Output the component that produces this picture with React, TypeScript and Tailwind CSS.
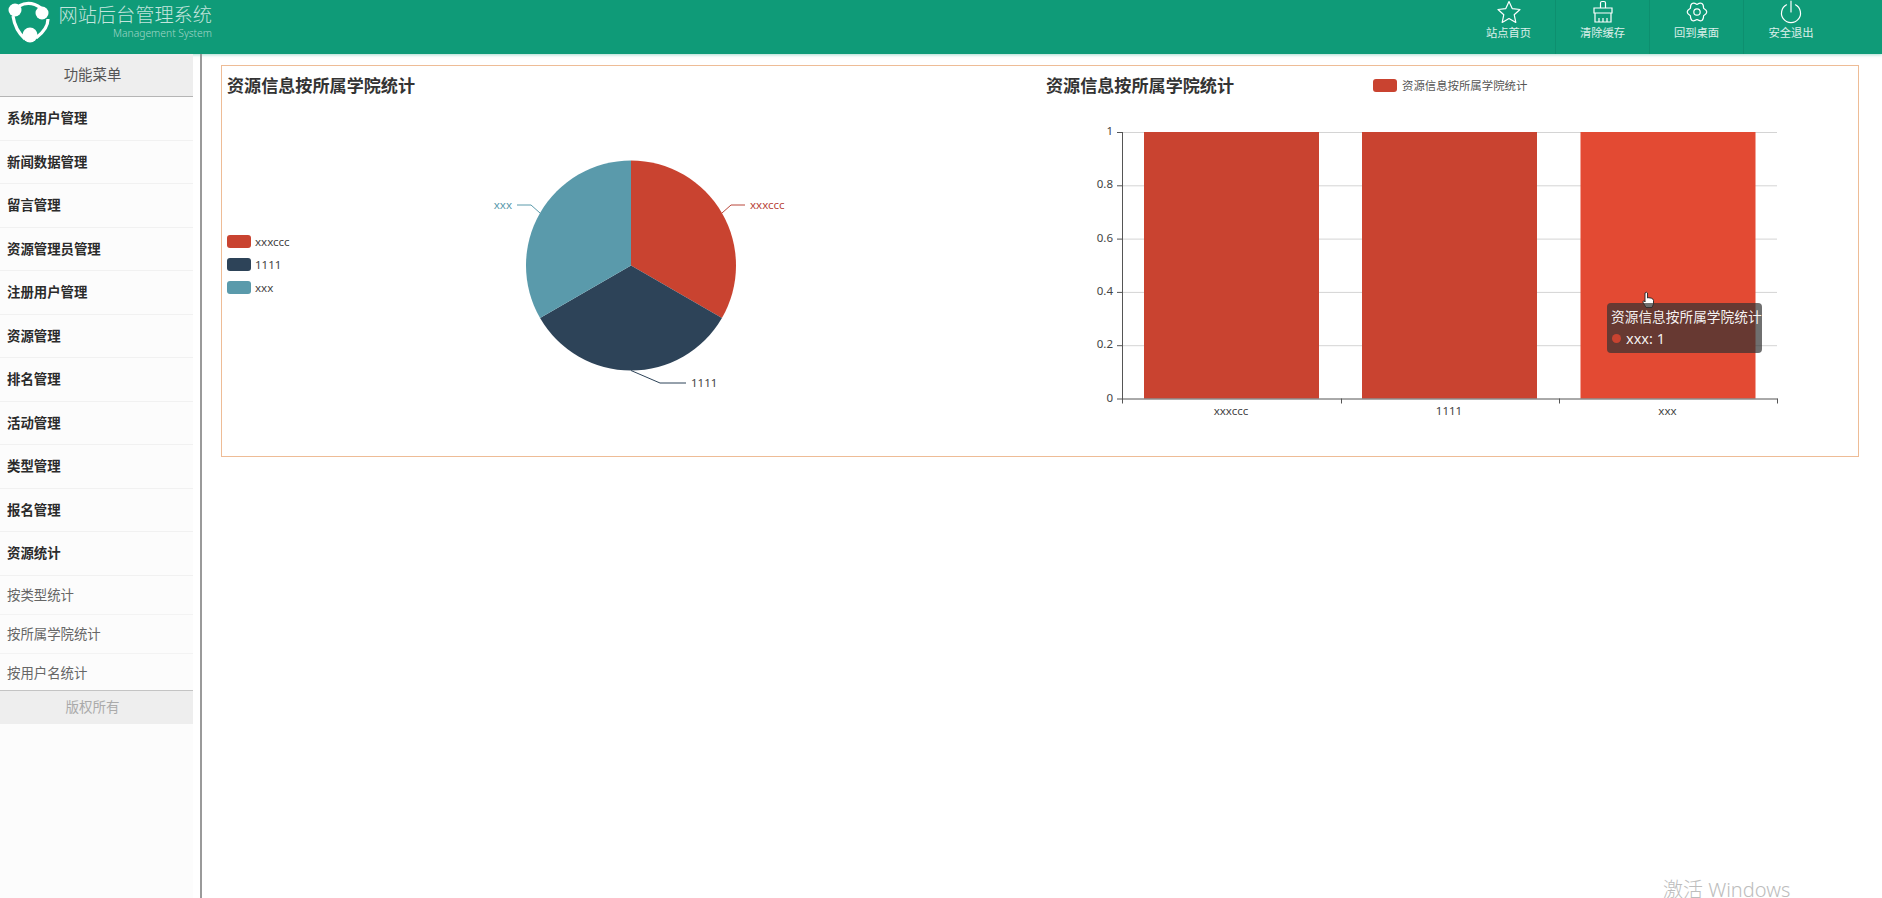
import React from "react";

const menu = ["系统用户管理","新闻数据管理","留言管理","资源管理员管理","注册用户管理","资源管理","排名管理","活动管理","类型管理","报名管理","资源统计"];
const sub = ["按类型统计","按所属学院统计","按用户名统计"];
const F = '"Noto Sans","Noto Sans CJK SC",sans-serif';

function Logo() {
  return (
    <svg width="58" height="50" viewBox="0 0 58 50" className="shrink-0">
      <path d="M13 16 Q15 30 25 39" fill="none" stroke="#fff" strokeWidth="3.2" />
      <path d="M48 19 Q48 29 36 38" fill="none" stroke="#fff" strokeWidth="3.2" />
      <path d="M19 6 Q30 0 41 8" fill="none" stroke="#fff" strokeWidth="3.2" />
      <circle cx="15" cy="10" r="6.5" fill="#fff" />
      <circle cx="42" cy="13" r="6.5" fill="#fff" />
      <circle cx="30" cy="35" r="7.5" fill="#fff" />
    </svg>
  );
}

const Star = () => (
  <svg width="26" height="24" viewBox="0 0 26 24" fill="none" stroke="#fff" strokeWidth="1.2" strokeLinejoin="round">
    <path d="M13 1.5 L16.2 8.6 L24 9.5 L18.2 14.7 L19.8 22.4 L13 18.5 L6.2 22.4 L7.8 14.7 L2 9.5 L9.8 8.6 Z" />
  </svg>
);
const Broom = () => (
  <svg width="24" height="24" viewBox="0 0 24 24" fill="none" stroke="#fff" strokeWidth="1.2">
    <path d="M9.5 8 V3 Q9.5 1.5 11 1.5 H13 Q14.5 1.5 14.5 3 V8" />
    <path d="M3 8 H21 V13 H3 Z" />
    <path d="M4 13 V22 H20 V13" />
    <path d="M8 18 V22 M12 18 V22 M16 18 V22" />
  </svg>
);
const Cog = () => (
  <svg width="24" height="24" viewBox="0 0 24 24" fill="none" stroke="#fff" strokeWidth="1.2" strokeLinejoin="round">
    <path d="M18.6 8.2 Q25 12 18.6 15.8 Q18.5 23.26 12 19.6 Q5.5 23.26 5.4 15.8 Q-1 12 5.4 8.2 Q5.5 0.74 12 4.4 Q18.5 0.74 18.6 8.2 Z" />
    <circle cx="12" cy="12" r="3.2" />
  </svg>
);
const Power = () => (
  <svg width="24" height="24" viewBox="0 0 24 24" fill="none" stroke="#fff" strokeWidth="1.2" strokeLinecap="round">
    <path d="M12 1 V12" />
    <path d="M7.5 4.8 A9.5 9.5 0 1 0 16.5 4.8" />
  </svg>
);

const nav: [React.ReactNode, string][] = [
  [<Star />, "站点首页"],
  [<Broom />, "清除缓存"],
  [<Cog />, "回到桌面"],
  [<Power />, "安全退出"],
];

function Header() {
  return (
    <header className="h-[54px] shrink-0 flex items-start justify-between bg-[#0f9b78] shadow-[0_1px_3px_rgba(15,155,120,0.35)] overflow-hidden">
      <div className="flex items-start h-full">
        <Logo />
        <div className="pt-[2px] w-[154px] text-right">
          <div className="text-[19.2px] leading-[26px] whitespace-nowrap text-white/75 font-light">网站后台管理系统</div>
          <div className="text-[10.3px] leading-[12px] -mt-[1px] text-white/60 font-light">Management System</div>
        </div>
      </div>
      <nav className="flex mr-[44px] h-full">
        {nav.map(([icon, label], i) => (
          <div key={label} className={`w-[94px] flex flex-col items-center ${i < 3 ? "border-r border-[#0d8f6f]" : ""}`}>
            <div className="h-[24px] flex items-center">{icon}</div>
            <div className="text-[11.3px] leading-[16px] mt-[1px] text-white/85">{label}</div>
          </div>
        ))}
      </nav>
    </header>
  );
}

function Sidebar() {
  return (
    <aside className="w-[193px] shrink-0 bg-[#fcfcfc]">
      <div className="h-[43px] flex items-center justify-center pr-[8px] bg-[#eeeeee] border-b border-[#b5b5b5] text-[14.4px] text-[#555]">功能菜单</div>
      <div className="h-[593px] overflow-hidden">
        {menu.map((m) => (
          <div key={m} className="h-[43.5px] flex items-center pl-[7px] border-b border-[#f1f1f1] text-[13.4px] font-bold text-[#2b2b2b]">{m}</div>
        ))}
        {sub.map((m) => (
          <div key={m} className="h-[39px] flex items-center pl-[7px] pt-[1px] border-b border-[#f3f3f3] text-[13.4px] text-[#666]">{m}</div>
        ))}
      </div>
      <div className="h-[34px] flex items-center justify-center pr-[8px] bg-[#eeeeee] border-t border-[#c4c4c4] text-[13.5px] text-[#aaa]">版权所有</div>
    </aside>
  );
}

function PieChart() {
  const cx = 410, cy = 199.5, r = 105;
  const px = (r * Math.sqrt(3)) / 2, py = r / 2;
  const right = `${cx + px} ${cy + py}`, left = `${cx - px} ${cy + py}`;
  return (
    <svg width="819" height="389" viewBox="0 0 819 389" className="shrink-0 -ml-px" style={{ fontFamily: F }}>
      <text x="6" y="26" fontSize="17.1" fontWeight="700" fill="#333">资源信息按所属学院统计</text>
      <rect x="6" y="169" width="24" height="13" rx="3" fill="#c94330" />
      <text x="34" y="180" fontSize="11.5" fill="#444">xxxccc</text>
      <rect x="6" y="192" width="24" height="13" rx="3" fill="#2d4358" />
      <text x="34" y="203" fontSize="11.5" fill="#444">1111</text>
      <rect x="6" y="215" width="24" height="13" rx="3" fill="#5a9aab" />
      <text x="34" y="226" fontSize="11.5" fill="#444">xxx</text>
      <path d={`M${cx} ${cy} L${cx} ${cy - r} A${r} ${r} 0 0 1 ${right} Z`} fill="#c94330" />
      <path d={`M${cx} ${cy} L${right} A${r} ${r} 0 0 1 ${left} Z`} fill="#2d4358" />
      <path d={`M${cx} ${cy} L${left} A${r} ${r} 0 0 1 ${cx} ${cy - r} Z`} fill="#5a9aab" />
      <path d="M501 147 L510 139 L524 139" fill="none" stroke="#b9463a" strokeWidth="1" />
      <text x="529" y="143" fontSize="11.5" fill="#b9463a">xxxccc</text>
      <path d="M319 147 L310 139 L296 139" fill="none" stroke="#5a9aab" strokeWidth="1" />
      <text x="291" y="143" fontSize="11.5" fill="#5a9aab" textAnchor="end">xxx</text>
      <path d="M410 304.5 L439 317 L465 317" fill="none" stroke="#2d4358" strokeWidth="1" />
      <text x="470" y="321" fontSize="11.5" fill="#444">1111</text>
    </svg>
  );
}

function BarChart() {
  const ox = 81, x1 = 736, top = 66, bot = 332.5;
  const ys = [0, 1, 2, 3, 4, 5].map((i) => top + (i * (bot - top)) / 5);
  const labels = ["1", "0.8", "0.6", "0.4", "0.2", "0"];
  const bars: [number, string, string][] = [
    [103, "#c94330", "xxxccc"],
    [321, "#c94330", "1111"],
    [539.5, "#e34a33", "xxx"],
  ];
  return (
    <svg width="816" height="389" viewBox="0 0 816 389" className="shrink-0" style={{ fontFamily: F }}>
      <text x="5" y="26" fontSize="17.1" fontWeight="700" fill="#333">资源信息按所属学院统计</text>
      <rect x="332" y="13" width="24" height="13" rx="3" fill="#c94330" />
      <text x="361" y="24" fontSize="11.4" fill="#555">资源信息按所属学院统计</text>
      {ys.slice(0, 5).map((y) => (
        <line key={y} x1={ox} x2={x1} y1={y + 0.5} y2={y + 0.5} stroke="#d4d4d4" />
      ))}
      {bars.map(([x, c, l]) => (
        <g key={l}>
          <rect x={x} y={top} width="175" height={bot - top} fill={c} />
          <text x={x + 87} y="349" fontSize="11.5" fill="#444" textAnchor="middle">{l}</text>
        </g>
      ))}
      <path d={`M${ox + 0.5} ${top} V${bot + 5} M${ox} ${bot + 0.5} H${x1 + 0.5}`} fill="none" stroke="#555" strokeWidth="1" />
      {ys.map((y, i) => (
        <g key={i}>
          <line x1={ox - 5} x2={ox} y1={y + 0.5} y2={y + 0.5} stroke="#555" />
          <text x={ox - 9} y={y + 3} fontSize="11.5" fill="#444" textAnchor="end">{labels[i]}</text>
        </g>
      ))}
      {[300, 518, 736].map((x) => (
        <line key={x} x1={x + 0.5} x2={x + 0.5} y1={bot} y2={bot + 5} stroke="#555" />
      ))}
    </svg>
  );
}

function HandCursor() {
  return (
    <svg width="12" height="18" viewBox="0 0 12 17" className="absolute left-[1420px] top-[225px]">
      <path d="M3 1.5 Q4.5 0 5.5 1.5 V6.5 Q7 5.8 8 6.5 Q9.5 6.2 10 7.2 Q11.5 7.4 11.5 9 V12.5 L10 16 H4 L0.8 10.5 Q0.8 9 2.5 9.6 L3 10.5 Z" fill="#fff" stroke="#222" strokeWidth="0.9" />
    </svg>
  );
}

function Tooltip() {
  return (
    <div className="absolute left-[1385px] top-[237px] w-[155px] h-[50px] rounded-[4px] bg-[rgba(50,50,50,0.7)] px-[4px] pt-[3px] text-[13.7px] leading-[21px] text-white/95 whitespace-nowrap">
      <div>资源信息按所属学院统计</div>
      <div className="flex items-center gap-[5px] text-[14.5px] mt-[1px]">
        <span className="ml-[1px] w-[9px] h-[9px] rounded-full bg-[#c94330]" />
        xxx: 1
      </div>
    </div>
  );
}

export default function App() {
  return (
    <div className="relative w-[1882px] h-[898px] overflow-hidden bg-white flex flex-col font-['Noto_Sans','Noto_Sans_CJK_SC',sans-serif]">
      <Header />
      <div className="flex flex-1 min-h-0">
        <Sidebar />
        <main className="ml-[7px] flex-1 border-l-2 border-[#9a9a9a] pl-[19px] pr-[23px] pt-[11px]">
          <div className="relative h-[392px] border border-[#eebc96] flex gap-[1px]">
            <PieChart />
            <BarChart />
            <HandCursor />
            <Tooltip />
          </div>
        </main>
      </div>
      <div className="absolute left-[1663px] top-[880px] text-[20px] leading-[20px] text-[#bdbdbd] font-light">激活 Windows</div>
    </div>
  );
}
